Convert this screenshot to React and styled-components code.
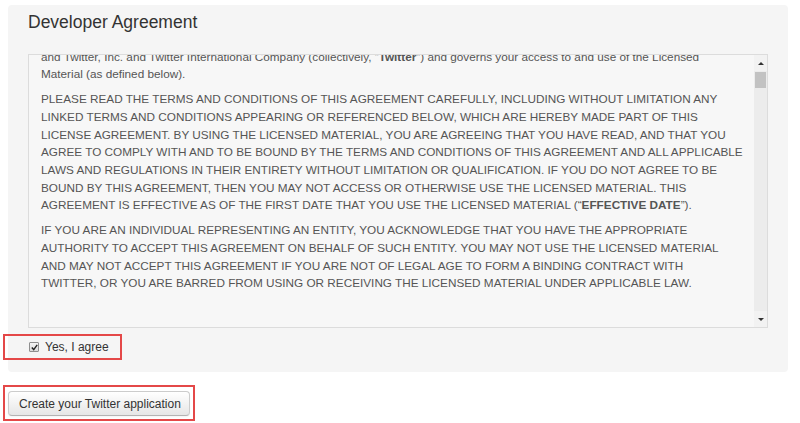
import React, { useLayoutEffect, useRef } from 'react';
import styled, { createGlobalStyle } from 'styled-components';

const GlobalStyle = createGlobalStyle`
  html, body {
    margin: 0;
    background: #ffffff;
  }
  body {
    font-family: "Liberation Sans", Arial, sans-serif;
    color: #333333;
  }
`;

const Page = styled.div`
  padding: 5px 0 0 8px;
`;

const Panel = styled.section`
  width: 780px;
  box-sizing: border-box;
  background: #f5f5f5;
  border-radius: 4px;
  padding: 7px 20px 12px 20px;
`;

const Title = styled.h2`
  margin: 0 0 22px 0;
  font-size: 17.5px;
  line-height: 20px;
  font-weight: normal;
  color: #333333;
`;

const Box = styled.div`
  display: flex;
  width: 740px;
  height: 274px;
  box-sizing: border-box;
  border: 1px solid #dcdcdc;
  background: #f7f7f7;
`;

const Scroller = styled.div`
  flex: 1;
  overflow: hidden;
`;

const Text = styled.div`
  padding: 0 12px 80px 12px;
  font-size: 11.75px;
  line-height: 17.65px;
  color: #555555;
`;

const Para = styled.p`
  margin: 0 0 7.4px 0;
`;

const Line = styled.span`
  display: block;
  white-space: nowrap;
`;

const Scrollbar = styled.div`
  width: 13px;
  display: flex;
  flex-direction: column;
  background: #ececec;
`;

const Arrow = styled.div`
  height: 16px;
  display: flex;
  align-items: center;
  justify-content: center;
  background: #f2f2f2;
  &::before {
    content: '';
    border-left: 3px solid transparent;
    border-right: 3px solid transparent;
    ${(p) => (p.$down ? 'border-top: 3px solid #333;' : 'border-bottom: 3px solid #333;')}
  }
`;

const Track = styled.div`
  flex: 1;
  padding: 1px 1px 0 1px;
`;

const Thumb = styled.div`
  height: 16px;
  background: #c2c2c2;
`;

const Highlight = styled.div`
  display: ${(p) => (p.$inline ? 'flex' : 'inline-flex')};
  align-items: center;
  border: 2px solid #e44848;
  box-sizing: border-box;
`;

const AgreeBox = styled(Highlight)`
  margin: 6px 0 0 -25px;
  width: 119px;
  height: 26px;
  padding-left: 24px;
`;

const ButtonBox = styled(Highlight)`
  margin: 13px 0 0 -5px;
  padding: 4px 3px 3px 3px;
`;

const Label = styled.label`
  display: flex;
  align-items: center;
  gap: 6px;
  font-size: 12px;
  color: #333333;
`;

const Check = styled.span`
  width: 8px;
  height: 8px;
  border: 1px solid #8f8f8f;
  border-radius: 1px;
  background: linear-gradient(#f4f4f4, #dcdcdc);
  display: flex;
  align-items: center;
  justify-content: center;
`;

const Button = styled.button`
  width: 182px;
  height: 25px;
  padding: 0 10px;
  font-family: "Liberation Sans", Arial, sans-serif;
  font-size: 12px;
  white-space: nowrap;
  color: #333333;
  text-align: left;
  background: linear-gradient(#ffffff, #e6e6e6);
  border: 1px solid #cccccc;
  border-bottom-color: #b3b3b3;
  border-radius: 4px;
  box-shadow: inset 0 1px 0 rgba(255, 255, 255, 0.2), 0 1px 2px rgba(0, 0, 0, 0.05);
`;

const terms = [
  'PLEASE READ THE TERMS AND CONDITIONS OF THIS AGREEMENT CAREFULLY, INCLUDING WITHOUT LIMITATION ANY',
  'LINKED TERMS AND CONDITIONS APPEARING OR REFERENCED BELOW, WHICH ARE HEREBY MADE PART OF THIS',
  'LICENSE AGREEMENT. BY USING THE LICENSED MATERIAL, YOU ARE AGREEING THAT YOU HAVE READ, AND THAT YOU',
  'AGREE TO COMPLY WITH AND TO BE BOUND BY THE TERMS AND CONDITIONS OF THIS AGREEMENT AND ALL APPLICABLE',
  'LAWS AND REGULATIONS IN THEIR ENTIRETY WITHOUT LIMITATION OR QUALIFICATION. IF YOU DO NOT AGREE TO BE',
  'BOUND BY THIS AGREEMENT, THEN YOU MAY NOT ACCESS OR OTHERWISE USE THE LICENSED MATERIAL. THIS',
];

const entity = [
  'IF YOU ARE AN INDIVIDUAL REPRESENTING AN ENTITY, YOU ACKNOWLEDGE THAT YOU HAVE THE APPROPRIATE',
  'AUTHORITY TO ACCEPT THIS AGREEMENT ON BEHALF OF SUCH ENTITY. YOU MAY NOT USE THE LICENSED MATERIAL',
  'AND MAY NOT ACCEPT THIS AGREEMENT IF YOU ARE NOT OF LEGAL AGE TO FORM A BINDING CONTRACT WITH',
  'TWITTER, OR YOU ARE BARRED FROM USING OR RECEIVING THE LICENSED MATERIAL UNDER APPLICABLE LAW.',
];

export default function App() {
  const scroller = useRef(null);
  const first = useRef(null);

  useLayoutEffect(() => {
    const box = scroller.current.getBoundingClientRect();
    const p = first.current.getBoundingClientRect();
    scroller.current.scrollTop = p.bottom - box.top - 27.6;
  }, []);

  return (
    <Page>
      <GlobalStyle />
      <Panel>
        <Title>Developer Agreement</Title>
        <Box>
          <Scroller ref={scroller}>
            <Text>
              <Para ref={first}>
                <Line>This Developer Agreement (“Agreement”) is made between you (either an individual or an entity, referred to herein as “you”)</Line>
                <Line>
                  and Twitter, Inc. and Twitter International Company (collectively, “<b>Twitter</b>”) and governs your access to and use of the Licensed
                </Line>
                <Line>Material (as defined below).</Line>
              </Para>
              <Para>
                {terms.map((t) => (
                  <Line key={t}>{t}</Line>
                ))}
                <Line>
                  AGREEMENT IS EFFECTIVE AS OF THE FIRST DATE THAT YOU USE THE LICENSED MATERIAL (“<b>EFFECTIVE DATE</b>”).
                </Line>
              </Para>
              <Para>
                {entity.map((t) => (
                  <Line key={t}>{t}</Line>
                ))}
              </Para>
            </Text>
          </Scroller>
          <Scrollbar>
            <Arrow />
            <Track>
              <Thumb />
            </Track>
            <Arrow $down />
          </Scrollbar>
        </Box>
        <AgreeBox $inline>
          <Label>
            <Check>
              <svg width="7" height="7" viewBox="0 0 7 7">
                <path d="M0.8 3.6 L2.7 5.6 L6.2 0.9" fill="none" stroke="#222" strokeWidth="1.4" />
              </svg>
            </Check>
            Yes, I agree
          </Label>
        </AgreeBox>
      </Panel>
      <ButtonBox>
        <Button>Create your Twitter application</Button>
      </ButtonBox>
    </Page>
  );
}
